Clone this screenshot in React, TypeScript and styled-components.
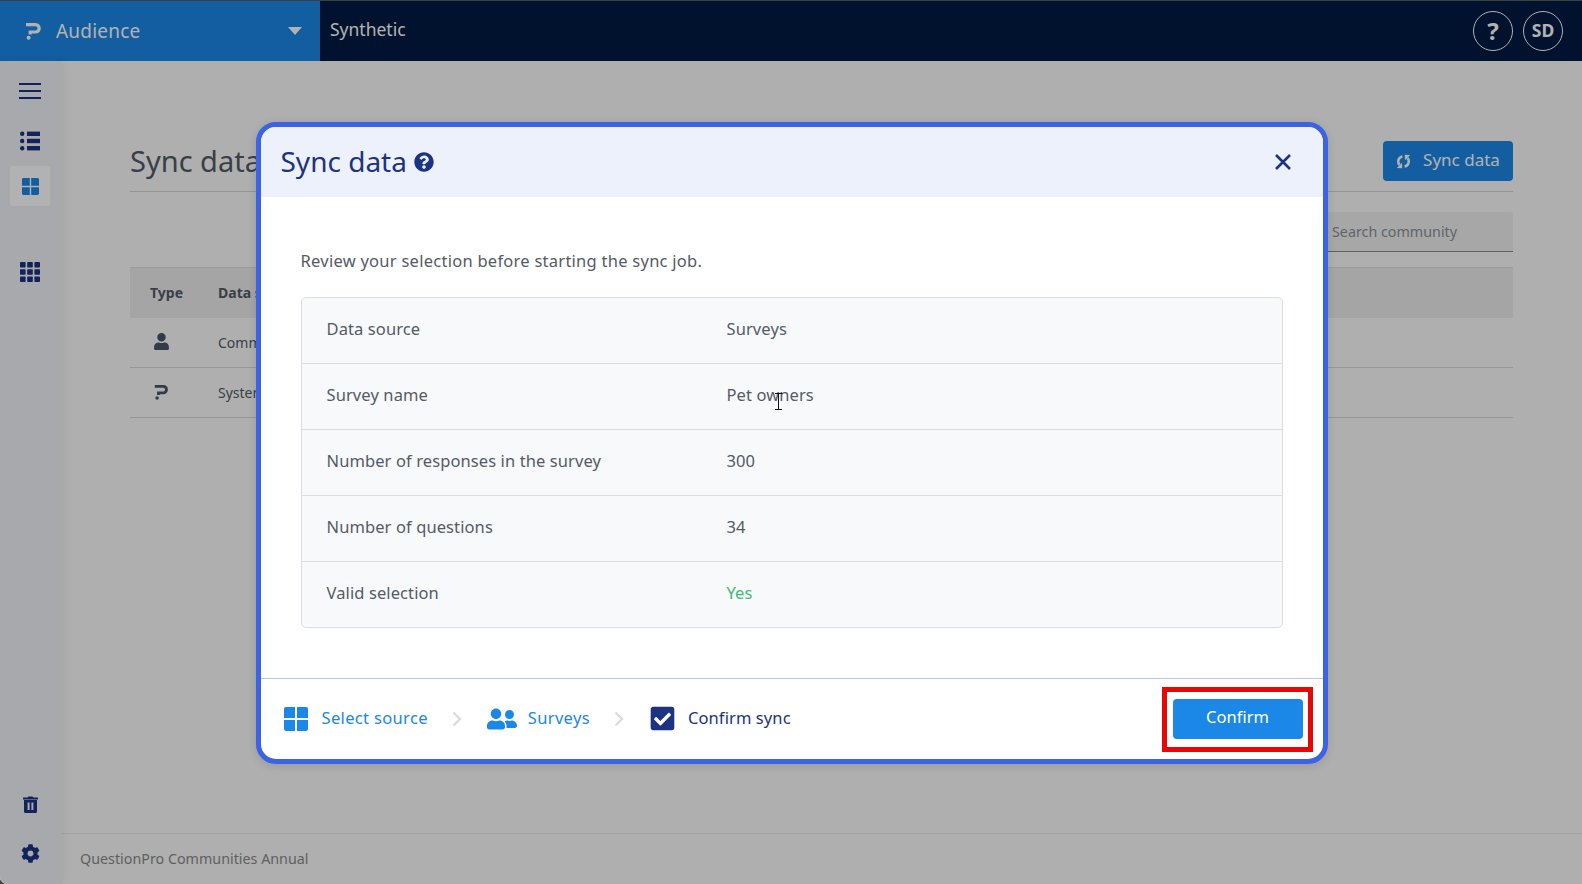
import React from 'react';
import styled, { createGlobalStyle } from 'styled-components';
import { FaCheckSquare, FaCog, FaQuestionCircle, FaUser, FaUserFriends } from 'react-icons/fa';

const FONT = '"Noto Sans", "Liberation Sans", sans-serif';

const GlobalStyle = createGlobalStyle`
  html, body {
    margin: 0;
    padding: 0;
    height: 100%;
    background: #3d3d3d;
    overflow: hidden;
  }
  * {
    box-sizing: border-box;
  }
`;

function LogoMark({ size = 18, color = '#fff' }: { size?: number; color?: string }) {
  return (
    <svg width={size} height={size} viewBox="0 0 18 18" fill="none">
      <path d="M2 2.6H11.5C16.4 2.6 16.4 10 11.5 10H6.2V12.4" stroke={color} strokeWidth="3.2" />
      <circle cx="4.6" cy="15.8" r="2" fill={color} />
    </svg>
  );
}

function SyncIcon() {
  return (
    <svg width="15" height="15" viewBox="0 0 15 15" fill="none" stroke="#fff" strokeWidth="2.6">
      <path d="M6.4 2.4C3.4 3 1.6 5.8 2.4 8.8c.2 .8 .5 1.4 1 2" />
      <path d="M.8 14 6.2 14.2 6 8.8z" fill="#fff" stroke="none" />
      <path d="M8.6 12.6c3-.6 4.8-3.4 4-6.4-.2-.8-.5-1.4-1-2" />
      <path d="M14.2 1 8.8 .8 9 6.2z" fill="#fff" stroke="none" />
    </svg>
  );
}

function TextCursor() {
  return (
    <svg width="9" height="17" viewBox="0 0 9 17" fill="none" stroke="#111" strokeWidth="1">
      <path d="M1 .5H8M4.5 .5V16.5M1 16.5H8" />
    </svg>
  );
}

function SquaresIcon({ size, color }: { size: number; color: string }) {
  return (
    <svg width={size} height={size} viewBox="0 0 24 24" fill={color}>
      <path d="M2 0H11V11H0V2A2 2 0 0 1 2 0Z" />
      <path d="M13 0H22A2 2 0 0 1 24 2V11H13Z" />
      <path d="M0 13H11V24H2A2 2 0 0 1 0 22Z" />
      <path d="M13 13H24V22A2 2 0 0 1 22 24H13Z" />
    </svg>
  );
}

function ListIcon() {
  return (
    <svg width="20" height="20" viewBox="0 0 20 20" fill="#1b3380">
      <circle cx="2.2" cy="2.8" r="2.2" />
      <circle cx="2.2" cy="10" r="2.2" />
      <circle cx="2.2" cy="17.2" r="2.2" />
      <rect x="7" y="0.6" width="13" height="4.4" />
      <rect x="7" y="7.8" width="13" height="4.4" />
      <rect x="7" y="15" width="13" height="4.4" />
    </svg>
  );
}

function AppsIcon() {
  return (
    <svg width="20" height="20" viewBox="0 0 20 20" fill="#1b3380">
      {[0, 7.2, 14.4].map((y) =>
        [0, 7.2, 14.4].map((x) => <rect key={`${x}-${y}`} x={x} y={y} width="5.6" height="5.6" rx="0.8" />),
      )}
    </svg>
  );
}

function TrashIcon() {
  return (
    <svg width="15" height="17" viewBox="0 0 15 17" fill="#1b3380">
      <path d="M0 1.6H4.6L5.4 .4H9.6L10.4 1.6H15V3.4H0Z" />
      <path
        fillRule="evenodd"
        d="M1 4H14V15.4A1.6 1.6 0 0 1 12.4 17H2.6A1.6 1.6 0 0 1 1 15.4ZM4.6 6.4V14H6.6V6.4ZM8.4 6.4V14H10.4V6.4Z"
      />
    </svg>
  );
}

function CloseIcon() {
  return (
    <svg width="16" height="16" viewBox="0 0 16 16" fill="none" stroke="#1b3380" strokeWidth="2.6">
      <path d="M1 1 15 15M15 1 1 15" />
    </svg>
  );
}

function ChevronIcon() {
  return (
    <svg width="10" height="16" viewBox="0 0 10 16" fill="none" stroke="#dcdcdc" strokeWidth="2.4">
      <path d="M1.5 1.5 8 8 1.5 14.5" />
    </svg>
  );
}

const reviewRows = [
  { label: 'Data source', value: 'Surveys' },
  { label: 'Survey name', value: 'Pet owners' },
  { label: 'Number of responses in the survey', value: '300' },
  { label: 'Number of questions', value: '34' },
  { label: 'Valid selection', value: 'Yes', ok: true },
];

export default function App() {
  return (
    <>
      <GlobalStyle />
      <Shell>
        <TopBar>
          <ProductMenu>
            <LogoMark size={18} />
            <ProductName>Audience</ProductName>
            <Caret />
          </ProductMenu>
          <WorkspaceName>Synthetic</WorkspaceName>
          <TopActions>
            <RoundButton $large>?</RoundButton>
            <RoundButton>SD</RoundButton>
          </TopActions>
        </TopBar>

        <Body>
          <SideNav>
            <NavTop>
              <Hamburger>
                <span />
                <span />
                <span />
              </Hamburger>
              <NavIcon>
                <ListIcon />
              </NavIcon>
              <NavIcon $active>
                <SquaresIcon size={17} color="#1b87e6" />
              </NavIcon>
              <NavIcon $spaced>
                <AppsIcon />
              </NavIcon>
            </NavTop>
            <NavBottom>
              <NavIcon>
                <TrashIcon />
              </NavIcon>
              <NavIcon>
                <FaCog size={19} />
              </NavIcon>
            </NavBottom>
          </SideNav>

          <Main>
            <Content>
              <PageHead>
                <PageTitle>Sync data</PageTitle>
                <SyncButton>
                  <SyncIcon />
                  <SyncLabel>Sync data</SyncLabel>
                </SyncButton>
              </PageHead>
              <SearchRow>
                <SearchBox>Search community</SearchBox>
              </SearchRow>
              <DataTable>
                <thead>
                  <tr>
                    <TypeHead>Type</TypeHead>
                    <HeadCell>Data source</HeadCell>
                  </tr>
                </thead>
                <tbody>
                  <tr>
                    <TypeCell>
                      <FaUser size={17} />
                    </TypeCell>
                    <BodyCell>Community</BodyCell>
                  </tr>
                  <tr>
                    <TypeCell>
                      <LogoMark size={16} color="#4a5568" />
                    </TypeCell>
                    <BodyCell>System</BodyCell>
                  </tr>
                </tbody>
              </DataTable>
            </Content>
            <Footer>QuestionPro Communities Annual</Footer>
          </Main>
        </Body>

        <Overlay>
          <Modal>
            <ModalHeader>
              <ModalTitle>Sync data</ModalTitle>
              <HelpIcon>
                <FaQuestionCircle size={20} />
              </HelpIcon>
              <CloseButton>
                <CloseIcon />
              </CloseButton>
            </ModalHeader>

            <ModalBody>
              <Intro>Review your selection before starting the sync job.</Intro>
              <ReviewTable>
                {reviewRows.map((row) => (
                  <ReviewRow key={row.label}>
                    <span>{row.label}</span>
                    <ReviewValue $ok={row.ok}>{row.value}</ReviewValue>
                  </ReviewRow>
                ))}
              </ReviewTable>
              <CursorMark>
                <TextCursor />
              </CursorMark>
            </ModalBody>

            <ModalFooter>
              <Steps>
                <Step>
                  <SquaresIcon size={24} color="#1b87e6" />
                  <StepLabel>Select source</StepLabel>
                </Step>
                <StepGap>
                  <ChevronIcon />
                </StepGap>
                <Step $tight>
                  <FaUserFriends size={30} />
                  <StepLabel>Surveys</StepLabel>
                </Step>
                <StepGap>
                  <ChevronIcon />
                </StepGap>
                <Step $current>
                  <FaCheckSquare size={27} />
                  <StepLabel>Confirm sync</StepLabel>
                </Step>
              </Steps>
              <ConfirmButton>
                <ConfirmLabel>Confirm</ConfirmLabel>
              </ConfirmButton>
              <Highlight />
            </ModalFooter>
          </Modal>
        </Overlay>
      </Shell>
    </>
  );
}

const Shell = styled.div`
  position: relative;
  display: flex;
  flex-direction: column;
  height: 883px;
  margin-top: 1px;
  overflow: hidden;
  border-bottom-left-radius: 7px;
  background: #fbfbfb;
  font-family: ${FONT};
`;

const TopBar = styled.header`
  display: flex;
  align-items: stretch;
  flex: 0 0 60px;
  background: #001a42;
  color: #fff;
`;

const ProductMenu = styled.div`
  display: flex;
  align-items: center;
  width: 320px;
  padding: 0 18px 0 24px;
  background: #1b87e6;
`;

const ProductName = styled.span`
  margin-left: 14px;
  font-size: 19px;
  letter-spacing: 0.2px;
`;

const Caret = styled.span`
  margin-left: auto;
  border-left: 7px solid transparent;
  border-right: 7px solid transparent;
  border-top: 8px solid #fff;
`;

const WorkspaceName = styled.div`
  display: flex;
  align-items: center;
  padding: 0 0 5px 10px;
  font-size: 17.5px;
`;

const TopActions = styled.div`
  display: flex;
  align-items: center;
  gap: 10px;
  margin-left: auto;
  padding-right: 19px;
`;

const RoundButton = styled.div<{ $large?: boolean }>`
  display: flex;
  align-items: center;
  justify-content: center;
  width: 40px;
  height: 40px;
  padding-bottom: 2px;
  border: 1px solid #fff;
  border-radius: 50%;
  font-size: ${(p) => (p.$large ? '24px' : '17.5px')};
  font-weight: 700;
`;

const Body = styled.div`
  display: flex;
  flex: 1;
  min-height: 0;
`;

const SideNav = styled.nav`
  position: relative;
  display: flex;
  flex-direction: column;
  justify-content: space-between;
  flex: 0 0 62px;
  padding: 10px 10px 11px;
  background: #f0f3f8;
  box-shadow: 2px 0 8px rgba(0, 0, 0, 0.06);
  color: #1b3380;
`;

const NavTop = styled.div`
  display: flex;
  flex-direction: column;
  gap: 5px;
`;

const NavBottom = styled.div`
  display: flex;
  flex-direction: column;
  gap: 9px;
`;

const NavIcon = styled.div<{ $active?: boolean; $spaced?: boolean }>`
  display: flex;
  align-items: center;
  justify-content: center;
  width: 40px;
  height: 40px;
  margin-top: ${(p) => (p.$spaced ? '41px' : '0')};
  border-radius: 3px;
  background: ${(p) => (p.$active ? '#fff' : 'transparent')};
  color: ${(p) => (p.$active ? '#1b87e6' : '#1b3380')};
`;

const Hamburger = styled.div`
  display: flex;
  flex-direction: column;
  justify-content: center;
  gap: 5px;
  width: 40px;
  height: 40px;
  padding: 0 9px;
  margin-bottom: 5px;

  span {
    display: block;
    height: 2px;
    background: #1b3380;
  }
`;

const Main = styled.main`
  display: flex;
  flex-direction: column;
  flex: 1;
  min-width: 0;
`;

const Content = styled.div`
  flex: 1;
  padding: 80px 69px 0 68px;
`;

const PageHead = styled.div`
  display: flex;
  align-items: center;
  justify-content: space-between;
  height: 51px;
  border-bottom: 1px solid #d4d4d4;
  padding-bottom: 10px;
`;

const PageTitle = styled.h1`
  margin: 0 0 2px;
  font-size: 29px;
  font-weight: 400;
  color: #545b66;
`;

const SyncButton = styled.div`
  display: flex;
  align-items: center;
  justify-content: center;
  gap: 12px;
  width: 130px;
  height: 40px;
  border-radius: 4px;
  background: #1b87e6;
  color: #fff;
  font-size: 17px;
`;

const SyncLabel = styled.span`
  margin-bottom: 3px;
`;

const SearchRow = styled.div`
  display: flex;
  justify-content: flex-end;
  margin-top: 20px;
`;

const SearchBox = styled.div`
  display: flex;
  align-items: center;
  width: 400px;
  height: 40px;
  padding: 0 0 1px 219px;
  border-bottom: 1px solid #8a8a8a;
  border-radius: 3px 3px 0 0;
  background: #f0f0f0;
  color: #8a8f96;
  font-size: 14.3px;
`;

const DataTable = styled.table`
  width: 100%;
  margin-top: 15px;
  border-collapse: collapse;
  color: #545b66;
`;

const HeadCell = styled.th`
  height: 50px;
  padding-bottom: 2px;
  background: #ededed;
  border-top: 1px solid #e0e0e0;
  text-align: left;
  font-size: 14px;
  font-weight: 700;
`;

const TypeHead = styled(HeadCell)`
  width: 87px;
  padding-left: 20px;
`;

const BodyCell = styled.td`
  height: 50px;
  border-bottom: 1px solid #d8d8d8;
  font-size: 14px;
`;

const TypeCell = styled(BodyCell)`
  padding: 3px 0 0 23px;
  vertical-align: middle;
  color: #4a5568;
`;

const Footer = styled.footer`
  display: flex;
  align-items: center;
  height: 51px;
  padding: 0 0 2px 18px;
  border-top: 1px solid #e8e8e8;
  color: #8a8a8a;
  font-size: 14.3px;
`;

const Overlay = styled.div`
  position: absolute;
  inset: 0;
  display: flex;
  align-items: center;
  justify-content: center;
  background: rgba(0, 0, 0, 0.3);
`;

const Modal = styled.section`
  display: flex;
  flex-direction: column;
  width: 1072px;
  height: 642px;
  margin-left: 1px;
  overflow: hidden;
  border: 5px solid #3b63e4;
  border-radius: 20px;
  background: #fff;
  box-shadow: 0 2px 10px rgba(0, 0, 0, 0.12);
`;

const ModalHeader = styled.div`
  display: flex;
  align-items: center;
  flex: 0 0 70px;
  padding: 0 21px 0 20px;
  background: #edf1fb;
  color: #1b3380;
`;

const ModalTitle = styled.h2`
  margin: 0 0 2px;
  font-size: 28px;
  font-weight: 400;
`;

const HelpIcon = styled.span`
  display: flex;
  margin-left: 7px;
`;

const CloseButton = styled.span`
  display: flex;
  margin-left: auto;
  margin-right: 11px;
`;

const ModalBody = styled.div`
  position: relative;
  flex: 1;
  padding: 54px 40px 0 40px;
`;

const Intro = styled.p`
  margin: 0 0 26px;
  height: 20px;
  line-height: 20px;
  font-size: 16.5px;
  letter-spacing: 0.26px;
  color: #545b66;
`;

const ReviewTable = styled.div`
  display: flex;
  flex-direction: column;
  height: 331px;
  border: 1px solid #dadde2;
  border-radius: 5px;
  background: #f8f9fb;
`;

const ReviewRow = styled.div`
  display: grid;
  grid-template-columns: 400px 1fr;
  align-items: center;
  flex: 1;
  padding: 0 0 4px 25px;
  border-bottom: 1px solid #dadde2;
  font-size: 16.5px;
  letter-spacing: 0.1px;
  color: #545b66;

  &:last-child {
    border-bottom: none;
  }
`;

const ReviewValue = styled.span<{ $ok?: boolean }>`
  color: ${(p) => (p.$ok ? '#43b872' : '#545b66')};
`;

const CursorMark = styled.span`
  position: absolute;
  top: 196px;
  left: 513px;
  display: flex;
`;

const ModalFooter = styled.div`
  position: relative;
  display: flex;
  align-items: center;
  justify-content: space-between;
  flex: 0 0 81px;
  padding: 0 20px 0 23px;
  border-top: 1px solid #b9c6fb;
`;

const Steps = styled.div`
  display: flex;
  align-items: center;
`;

const Step = styled.div<{ $current?: boolean; $tight?: boolean }>`
  display: flex;
  align-items: center;
  gap: ${(p) => (p.$tight ? '11px' : p.$current ? '12px' : '14px')};
  font-size: 16.5px;
  letter-spacing: ${(p) => (p.$current ? '0.1px' : '0.34px')};
  color: ${(p) => (p.$current ? '#1b3380' : '#1b87e6')};
`;

const StepLabel = styled.span`
  margin-bottom: 3px;
`;

const StepGap = styled.span`
  display: flex;
  width: 59px;
  justify-content: center;
`;

const ConfirmButton = styled.div`
  display: flex;
  align-items: center;
  justify-content: center;
  width: 130px;
  height: 40px;
  border-radius: 4px;
  background: #1b87e6;
  color: #fff;
  font-size: 16.5px;
`;

const ConfirmLabel = styled.span`
  margin-bottom: 4px;
`;

const Highlight = styled.span`
  position: absolute;
  top: 8px;
  right: 10px;
  width: 151px;
  height: 65px;
  border: 5px solid #e80606;
`;
